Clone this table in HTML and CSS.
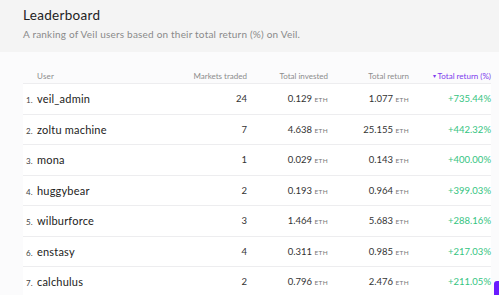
FILE: index.html
```html
<!DOCTYPE html>
<html lang="en">

<head>
	<meta charset="utf-8">
	<title>Leaderboard</title>
	<link rel="stylesheet" href="styles.css">
</head>

<body>
	<div class="page-head">
		<h1>Leaderboard</h1>
		<p>A ranking of Veil users based on their total return (%) on Veil.</p>
	</div>

	<div class="board">
		<div class="row row-head">
			<div class="cell user">User</div>
			<div class="cell num">Markets traded</div>
			<div class="cell num">Total invested</div>
			<div class="cell num">Total return</div>
			<div class="cell num sorted"><span class="caret">&#9662;</span> Total return (%)</div>
		</div>

		<div class="row">
			<div class="cell user"><span class="rank">1.</span>veil_admin</div>
			<div class="cell num">24</div>
			<div class="cell num">0.129 <span class="unit">ETH</span></div>
			<div class="cell num">1.077 <span class="unit">ETH</span></div>
			<div class="cell num pct">+735.44%</div>
		</div>
		<div class="row">
			<div class="cell user"><span class="rank">2.</span>zoltu machine</div>
			<div class="cell num">7</div>
			<div class="cell num">4.638 <span class="unit">ETH</span></div>
			<div class="cell num">25.155 <span class="unit">ETH</span></div>
			<div class="cell num pct">+442.32%</div>
		</div>
		<div class="row">
			<div class="cell user"><span class="rank">3.</span>mona</div>
			<div class="cell num">1</div>
			<div class="cell num">0.029 <span class="unit">ETH</span></div>
			<div class="cell num">0.143 <span class="unit">ETH</span></div>
			<div class="cell num pct">+400.00%</div>
		</div>
		<div class="row">
			<div class="cell user"><span class="rank">4.</span>huggybear</div>
			<div class="cell num">2</div>
			<div class="cell num">0.193 <span class="unit">ETH</span></div>
			<div class="cell num">0.964 <span class="unit">ETH</span></div>
			<div class="cell num pct">+399.03%</div>
		</div>
		<div class="row">
			<div class="cell user"><span class="rank">5.</span>wilburforce</div>
			<div class="cell num">3</div>
			<div class="cell num">1.464 <span class="unit">ETH</span></div>
			<div class="cell num">5.683 <span class="unit">ETH</span></div>
			<div class="cell num pct">+288.16%</div>
		</div>
		<div class="row">
			<div class="cell user"><span class="rank">6.</span>enstasy</div>
			<div class="cell num">4</div>
			<div class="cell num">0.311 <span class="unit">ETH</span></div>
			<div class="cell num">0.985 <span class="unit">ETH</span></div>
			<div class="cell num pct">+217.03%</div>
		</div>
		<div class="row">
			<div class="cell user"><span class="rank">7.</span>calchulus</div>
			<div class="cell num">2</div>
			<div class="cell num">0.796 <span class="unit">ETH</span></div>
			<div class="cell num">2.476 <span class="unit">ETH</span></div>
			<div class="cell num pct">+211.05%</div>
		</div>
	</div>

	<div class="chat-tab"></div>
</body>

</html>
```

FILE: styles.css
```css
* {
	box-sizing: border-box;
}

body,
html {
	height: 100%;
	overflow: hidden;
	padding: 0;
	margin: 0;
}

body {
	background-color: #fbfbfc;
	color: #222222;
	font-family: "Lato", "Open Sans", sans-serif;
}

.page-head {
	background-color: #f4f4f4;
	height: 52px;
	padding: 6px 23px 0 23px;
}

.page-head h1 {
	font-size: 13.5px;
	font-weight: 400;
	margin: 0;
	line-height: 18px;
	letter-spacing: 0.3px;
}

.page-head p {
	margin: 4px 0 0 0;
	font-size: 10px;
	color: #8a8a8a;
	letter-spacing: 0.2px;
}

.board {
	padding: 14px 8px 0 23px;
}

.row {
	display: grid;
	grid-template-columns: 1fr 60px 81px 81px 82px;
	align-items: center;
	height: 30.5px;
	border-bottom: 1px solid #ededef;
	background-color: #ffffff;
}

.row-head {
	height: 18px;
	background-color: transparent;
	font-size: 8px;
	color: #8c8c8c;
	padding-top: 2px;
}

.cell.user {
	padding-left: 14px;
}

.row .cell.user {
	font-size: 11px;
	letter-spacing: 0.2px;
}

.row-head .cell.user {
	font-size: 8px;
}

.rank {
	display: inline-block;
	width: 11px;
	margin-left: -11px;
	font-size: 8px;
	color: #444444;
}

.cell.num {
	text-align: right;
	font-size: 9.5px;
	color: #333333;
}

.row-head .cell.num {
	font-size: 8px;
	color: #8c8c8c;
}

.unit {
	font-size: 6.5px;
	color: #777777;
	letter-spacing: 0.3px;
}

.row-head .cell.sorted {
	color: #7c3aed;
}

.caret {
	font-size: 6px;
	vertical-align: 1px;
}

.cell.pct {
	color: #35c47f;
	font-size: 9.5px;
}

.chat-tab {
	position: fixed;
	left: 494px;
	top: 281px;
	width: 12px;
	height: 20px;
	border-radius: 3px;
	background-color: #6a1bff;
}
```
